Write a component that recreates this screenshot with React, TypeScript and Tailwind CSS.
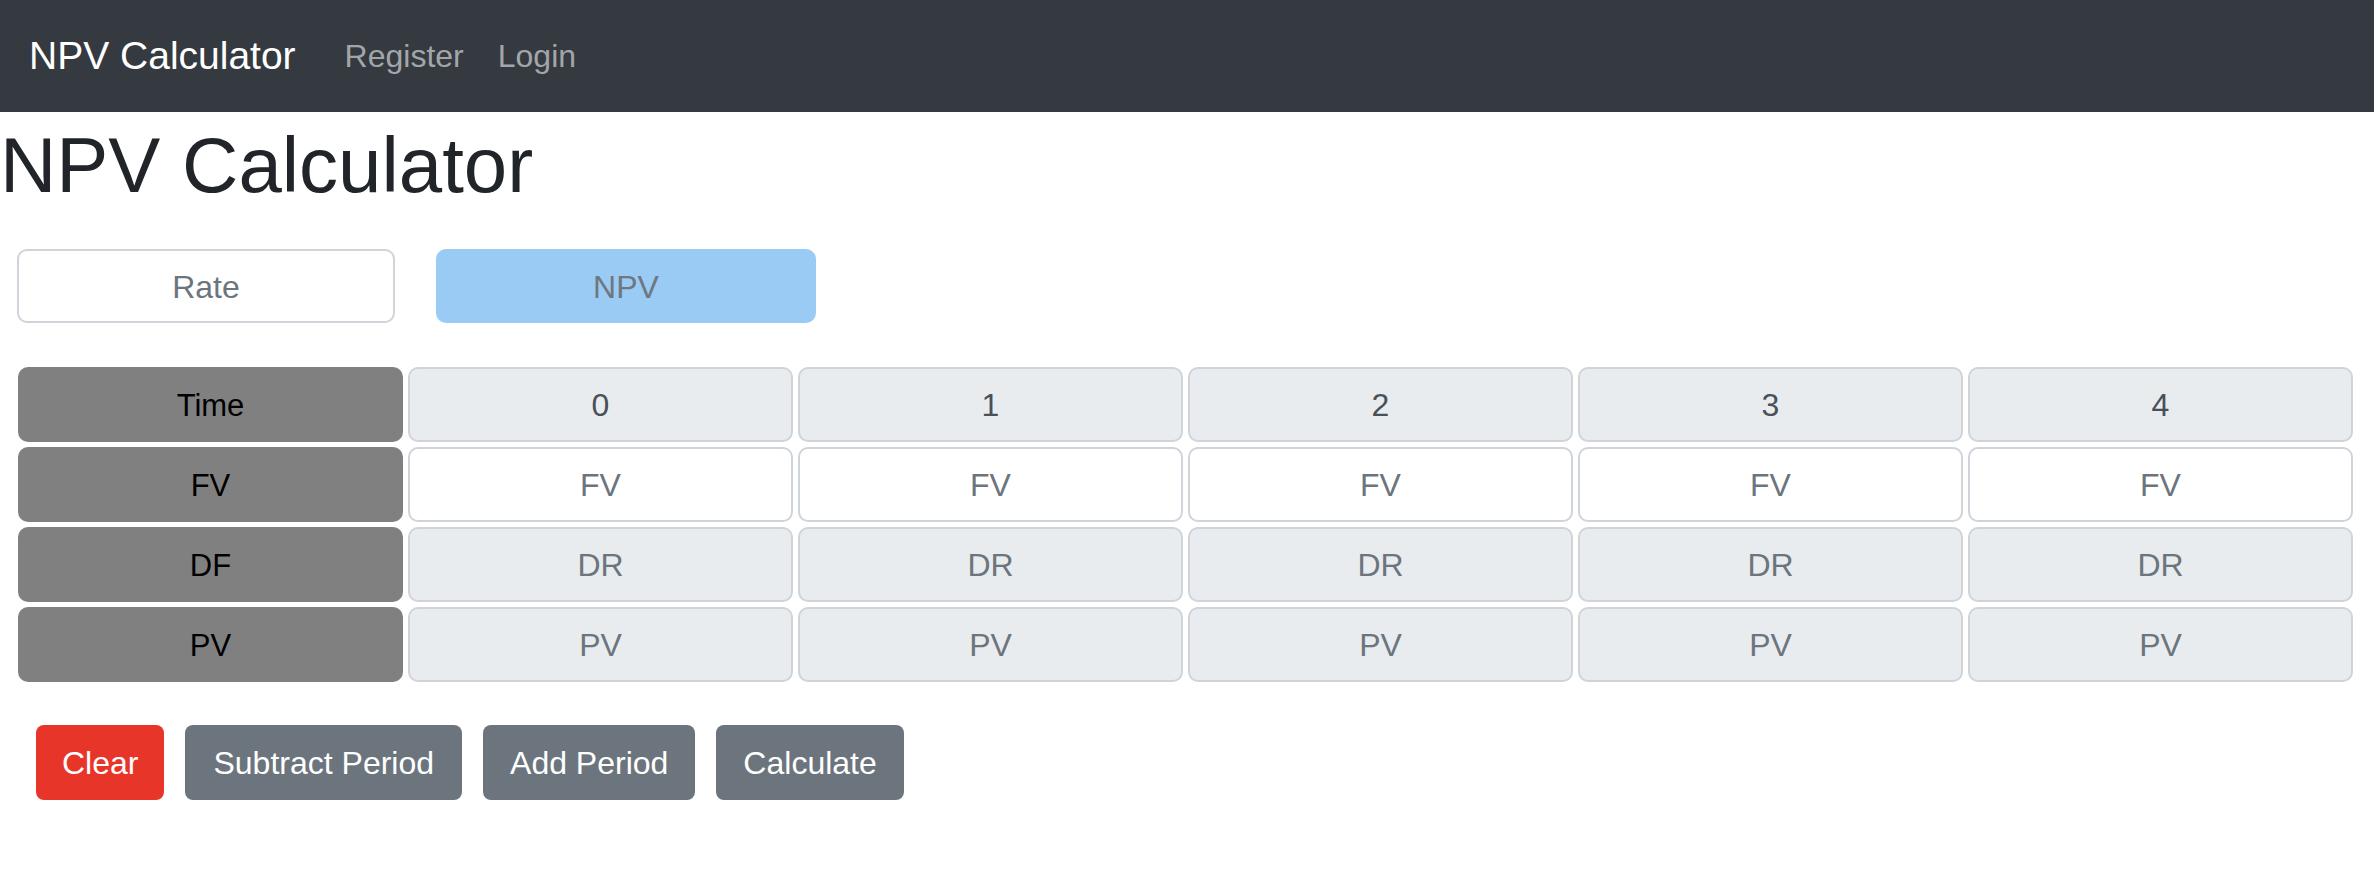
import React from "react";

const periods = [0, 1, 2, 3, 4];

function Label({ text }: { text: string }) {
  return (
    <div className="flex h-[75px] items-center justify-center rounded-[10px] bg-[#808080] pt-[3px] text-[31px] text-black">
      {text}
    </div>
  );
}

function Cell({ text, white, dark }: { text: string; white?: boolean; dark?: boolean }) {
  return (
    <div
      className={`flex h-[75px] items-center justify-center rounded-[10px] border-2 border-[#ced4da] pt-[1px] text-[32px] ${
        white ? "bg-white" : "bg-[#e9ecef]"
      } ${dark ? "text-[#495057]" : "text-[#6c757d]"}`}
    >
      {text}
    </div>
  );
}

export default function App() {
  return (
    <div className="min-h-screen bg-white font-['Liberation_Sans',Arial,sans-serif]">
      {/* Navbar */}
      <nav className="flex h-[112px] items-center bg-[#343a40] pl-[29px]">
        <span className="mr-[49px] text-[39px] text-white">NPV Calculator</span>
        <a className="pr-[34px] text-[32px] text-[#a3a6a9]">Register</a>
        <a className="text-[32px] text-[#a3a6a9]">Login</a>
      </nav>

      <h1 className="mt-[5px] text-[78px] leading-[96px] text-[#212529]">NPV Calculator</h1>

      {/* Mode toggles */}
      <div className="mt-[36px] flex gap-[41px] pl-[17px]">
        <div className="flex h-[74px] w-[378px] items-center justify-center rounded-[10px] border-2 border-[#ced4da] bg-white pt-[1px] text-[32px] text-[#6c757d]">
          Rate
        </div>
        <div className="flex h-[74px] w-[380px] items-center justify-center rounded-[10px] bg-[#99cbf5] pt-[1px] text-[32px] text-[#6f7780]">
          NPV
        </div>
      </div>

      {/* Table */}
      <div className="mt-[44px] grid grid-cols-6 gap-x-[5px] gap-y-[5px] pl-[18px] pr-[21px]">
        <Label text="Time" />
        {periods.map((p) => (
          <Cell key={"t" + p} text={String(p)} dark />
        ))}
        <Label text="FV" />
        {periods.map((p) => (
          <Cell key={"f" + p} text="FV" white />
        ))}
        <Label text="DF" />
        {periods.map((p) => (
          <Cell key={"d" + p} text="DR" />
        ))}
        <Label text="PV" />
        {periods.map((p) => (
          <Cell key={"p" + p} text="PV" />
        ))}
      </div>

      {/* Actions */}
      <div className="mt-[43px] flex gap-[21px] pl-[36px]">
        <button className="h-[75px] rounded-[8px] bg-[#e8352a] px-[26px] text-[32px] text-white">Clear</button>
        <button className="h-[75px] rounded-[8px] bg-[#6c757d] px-[28px] text-[32px] text-white">Subtract Period</button>
        <button className="h-[75px] rounded-[8px] bg-[#6c757d] px-[27px] text-[32px] text-white">Add Period</button>
        <button className="h-[75px] rounded-[8px] bg-[#6c757d] px-[27px] text-[32px] text-white">Calculate</button>
      </div>
    </div>
  );
}
